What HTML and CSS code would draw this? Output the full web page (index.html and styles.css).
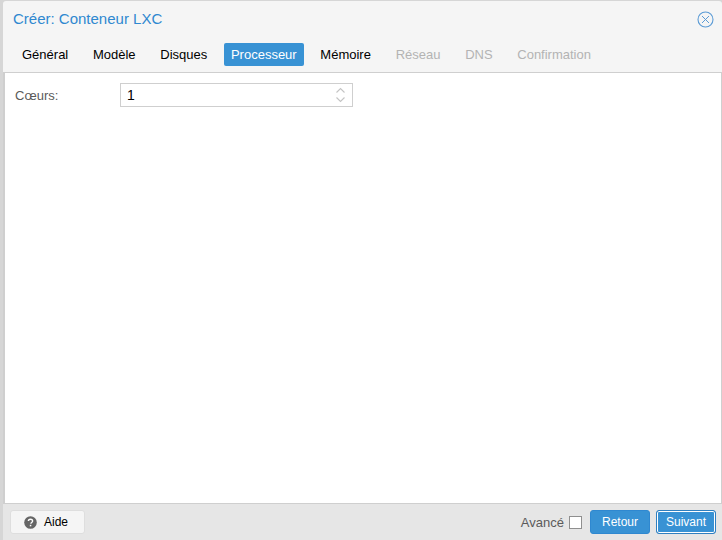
FILE: index.html
```html
<!DOCTYPE html>
<html lang="fr">
<head>
<meta charset="utf-8">
<title>Créer: Conteneur LXC</title>
<link rel="stylesheet" href="styles.css">
</head>
<body>
<div class="backdrop">
  <div class="window">
    <header class="head">
      <div class="titlebar">
        <span class="title">Créer: Conteneur LXC</span>
        <svg class="close" width="17" height="17" viewBox="0 0 17 17" aria-hidden="true">
          <circle cx="8.5" cy="8.5" r="7.5" fill="none" stroke="#5b9bd5" stroke-width="1.1"/>
          <path d="M5 5l7 7M12 5l-7 7" fill="none" stroke="#5b9bd5" stroke-width="1"/>
        </svg>
      </div>
      <nav class="tabs">
        <span class="tab">Général</span>
        <span class="tab">Modèle</span>
        <span class="tab">Disques</span>
        <span class="tab active">Processeur</span>
        <span class="tab">Mémoire</span>
        <span class="tab disabled">Réseau</span>
        <span class="tab disabled">DNS</span>
        <span class="tab disabled">Confirmation</span>
      </nav>
    </header>
    <main class="content">
      <div class="field">
        <label class="label">Cœurs:</label>
        <div class="spinner">
          <span class="value">1</span>
          <svg class="arrows" width="11" height="18" viewBox="0 0 11 18" aria-hidden="true">
            <path d="M1.5 6.5L5.5 2.500L9.5 6.500M1.5 11.500L5.5 15.500L9.5 11.500" fill="none" stroke="#c4c4c4" stroke-width="1.1"/>
          </svg>
        </div>
      </div>
    </main>
    <footer class="foot">
      <button class="btn help">
        <svg width="13" height="13" viewBox="0 0 13 13" aria-hidden="true">
          <circle cx="6.5" cy="6.5" r="6.3" fill="#666"/>
          <path d="M4.4 5.1c0-1.3 1-1.900 2.100-1.900s2.100.7 2.100 1.800c0 1.500-1.700 1.400-1.700 2.700" fill="none" stroke="#fff" stroke-width="1.400"/>
          <rect x="5.800" y="8.800" width="1.500" height="1.500" fill="#fff"/>
        </svg>
        <span>Aide</span>
      </button>
      <div class="actions">
        <span class="advanced">Avancé</span>
        <span class="check"></span>
        <button class="btn primary">Retour</button>
        <button class="btn primary focused">Suivant</button>
      </div>
    </footer>
  </div>
</div>
</body>
</html>
```
FILE: styles.css
```css
* { box-sizing: border-box; }
html, body { margin: 0; height: 100%; }
body { font-family: "Liberation Sans", Arial, sans-serif; font-size: 13px; background: #d6d6d6; overflow: hidden; }
.backdrop { height: 540px; padding: 1px 0 0 3px; }
.window { height: 539px; display: flex; flex-direction: column; background: #f5f5f5; border-radius: 3px 3px 0 0; overflow: hidden; }
.head { height: 71px; padding: 0 0 0 2px; flex: none; }
.titlebar { height: 35px; display: flex; align-items: center; justify-content: space-between; padding: 0 8px 1px 8px; }
.title { font-size: 15px; color: #2f88d0; }
.close { display: block; margin-top: 3px; }
.tabs { display: flex; gap: 8.7px; padding: 7px 0 0 9px; }
.tab { height: 23px; line-height: 23px; padding: 0 8px; color: #000; border-radius: 2px; white-space: nowrap; }
.tab.active { background: #3892d4; color: #fff; padding: 0 7px; }
.tab.disabled { color: #b3b3b3; }
.content { flex: 1; background: #fff; border: 1px solid #cfcfcf; border-width: 1px 1px 1px 2px; padding: 10px 0 0 10px; }
.field { display: flex; align-items: center; height: 24px; }
.label { width: 105px; color: #5a5a5a; flex: none; }
.spinner { width: 233px; height: 24px; border: 1px solid #cfcfcf; display: flex; align-items: center; justify-content: space-between; padding: 0 6px; color: #000; font-size: 14px; }
.arrows { display: block; }
.foot { height: 36px; flex: none; background: #e6e6e6; display: flex; align-items: center; justify-content: space-between; padding: 0 6px 0 7px; }
.btn { font: inherit; font-size: 12px; height: 24px; border-radius: 3px; border: 1px solid #dedede; padding: 0; cursor: default; }
.help { width: 75px; background: #f5f5f5; color: #000; display: flex; align-items: center; gap: 7px; padding-left: 13px; }
.help svg { display: block; }
.actions { display: flex; align-items: center; }
.advanced { color: #5a5a5a; margin-right: 5px; }
.check { width: 13px; height: 13px; background: #fff; border: 1px solid #8f8f8f; margin-right: 8px; }
.primary { width: 60px; background: #3892d4; border-color: #2f88d0; color: #fff; margin-right: 6px; }
.focused { margin-right: 0; box-shadow: inset 0 0 0 1px #fff; border-color: #2f7fc0; }
```
